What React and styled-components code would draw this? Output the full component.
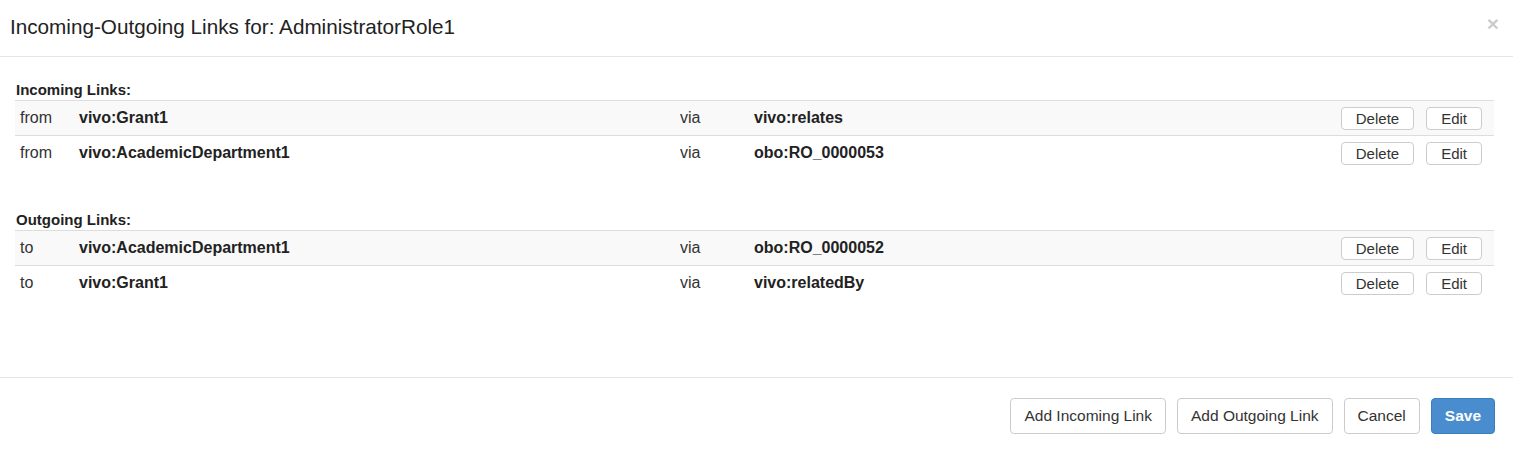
import React from 'react'
import styled, { createGlobalStyle } from 'styled-components'

const GlobalStyle = createGlobalStyle`
  html, body {
    margin: 0;
    padding: 0;
    background: #fff;
  }
  body {
    font-family: "Liberation Sans", Arial, Helvetica, sans-serif;
    color: #333;
  }
`

const Modal = styled.div`
  width: 1513px;
  height: 450px;
  display: flex;
  flex-direction: column;
  background: #fff;
`

const Header = styled.div`
  height: 57px;
  box-sizing: border-box;
  border-bottom: 1px solid #e5e5e5;
  display: flex;
  align-items: center;
  justify-content: space-between;
  padding: 0 14px 2px 10px;
`

const Title = styled.h4`
  margin: 0;
  font-size: 20.7px;
  font-weight: normal;
  color: #222;
`

const Close = styled.button`
  border: 0;
  background: none;
  padding: 0;
  margin-top: -8px;
  font-family: "Liberation Sans", Arial, sans-serif;
  font-size: 21px;
  font-weight: bold;
  line-height: 1;
  color: #000;
  opacity: 0.2;
  cursor: pointer;
`

const Body = styled.div`
  flex: 1;
  padding: 23px 19px 0 15px;
`

const Section = styled.section`
  margin-bottom: ${p => p.$gap || 0}px;
`

const Label = styled.div`
  font-size: 15px;
  font-weight: bold;
  line-height: 20px;
  padding-left: 1px;
  color: #222;
`

const Row = styled.div`
  display: grid;
  grid-template-columns: 59px 601px 74px 1fr auto;
  align-items: center;
  height: 35px;
  box-sizing: border-box;
  padding: 0 12px 0 5px;
  border-top: 1px solid #ddd;
  background: ${p => (p.$striped ? '#f9f9f9' : '#fff')};
  font-size: 16px;
`

const Cell = styled.span`
  font-weight: ${p => (p.$bold ? 'bold' : 'normal')};
  color: ${p => (p.$bold ? '#222' : '#333')};
  margin-top: -1px;
`

const Actions = styled.div`
  display: flex;
  gap: 12px;
`

const Button = styled.button`
  font-family: "Liberation Sans", Arial, sans-serif;
  font-size: ${p => (p.$small ? 15 : 15.5)}px;
  height: ${p => (p.$small ? 23 : 36)}px;
  padding: 0 ${p => (p.$small ? 14 : 13)}px;
  box-sizing: border-box;
  border-radius: 4px;
  border: 1px solid ${p => (p.$primary ? '#3b7dc0' : '#ccc')};
  background: ${p => (p.$primary ? '#4a8dcf' : '#fff')};
  color: ${p => (p.$primary ? '#fff' : '#333')};
  font-weight: ${p => (p.$primary ? 'bold' : 'normal')};
  cursor: pointer;
  white-space: nowrap;
`

const Footer = styled.div`
  border-top: 1px solid #e5e5e5;
  display: flex;
  justify-content: flex-end;
  gap: 11px;
  padding: 20px 18px 16px 15px;
  margin-top: 77px;
`

const incoming = [
  { dir: 'from', node: 'vivo:Grant1', prop: 'vivo:relates' },
  { dir: 'from', node: 'vivo:AcademicDepartment1', prop: 'obo:RO_0000053' },
]

const outgoing = [
  { dir: 'to', node: 'vivo:AcademicDepartment1', prop: 'obo:RO_0000052' },
  { dir: 'to', node: 'vivo:Grant1', prop: 'vivo:relatedBy' },
]

const LinkRows = ({ links }) =>
  links.map((l, i) => (
    <Row key={l.node + l.prop} $striped={i % 2 === 0}>
      <Cell>{l.dir}</Cell>
      <Cell $bold>{l.node}</Cell>
      <Cell>via</Cell>
      <Cell $bold>{l.prop}</Cell>
      <Actions>
        <Button $small>Delete</Button>
        <Button $small>Edit</Button>
      </Actions>
    </Row>
  ))

export default function App() {
  return (
    <Modal>
      <GlobalStyle />
      <Header>
        <Title>Incoming-Outgoing Links for: AdministratorRole1</Title>
        <Close aria-label="Close">×</Close>
      </Header>
      <Body>
        <Section $gap={40}>
          <Label>Incoming Links:</Label>
          <LinkRows links={incoming} />
        </Section>
        <Section>
          <Label>Outgoing Links:</Label>
          <LinkRows links={outgoing} />
        </Section>
      </Body>
      <Footer>
        <Button>Add Incoming Link</Button>
        <Button>Add Outgoing Link</Button>
        <Button>Cancel</Button>
        <Button $primary>Save</Button>
      </Footer>
    </Modal>
  )
}
